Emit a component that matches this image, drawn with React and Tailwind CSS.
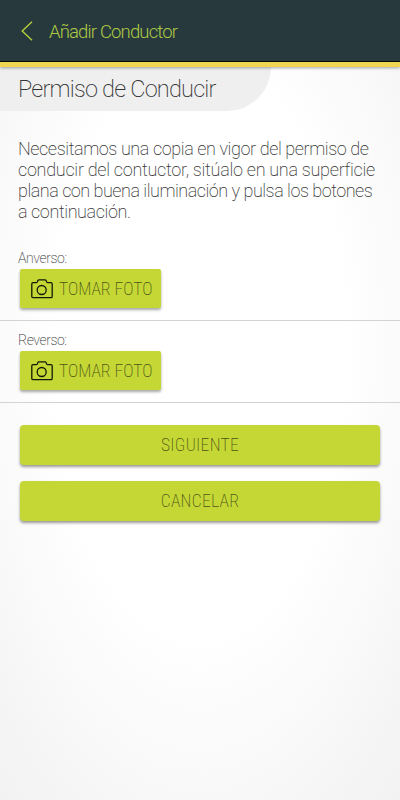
const CameraIcon = () => (
  <svg className="shrink-0" width="22" height="20" viewBox="0 0 22 20" fill="none" stroke="#111a08" strokeWidth="1.3" strokeLinejoin="round">
    <path d="M2 3.7H5.2Q6 3.7 6.3 3L6.9 1.5Q7.2 .9 8 .9H14Q14.8 .9 15.1 1.5L15.7 3Q16 3.7 16.8 3.7H20Q21.2 3.7 21.2 4.9V17.5Q21.2 18.7 20 18.7H2Q.8 18.7 .8 17.5V4.9Q.8 3.7 2 3.7Z" />
    <circle cx="10.7" cy="11" r="4.5" />
  </svg>
);

const PhotoField = ({ label }) => (
  <div className="h-[82px] border-b border-[#d3d3d3] pl-[18px]">
    <p className="pt-[10px] text-[14px] leading-[18px] tracking-[-0.42px] text-[#3a3a3a]">{label}</p>
    <button className="ml-[2px] mt-[2px] flex h-[39px] w-[141px] items-center rounded-[2px] bg-[#c5d734] pl-[11px] shadow-[0_2px_3px_rgba(0,0,0,0.35)]">
      <CameraIcon />
      <span className="ml-[6px] whitespace-nowrap pt-px text-[17.5px] font-stretch-[75%] text-[#4b5418]">TOMAR FOTO</span>
    </button>
  </div>
);

const ActionButton = ({ children }) => (
  <button className="flex h-10 w-full items-center justify-center rounded-[4px] bg-[#c5d734] text-[17.5px] font-stretch-[75%] tracking-[0.3px] text-[#4b5418] shadow-[0_2px_3px_rgba(0,0,0,0.4)]">
    {children}
  </button>
);

const App = () => {
  return (
    <div className="flex h-[800px] w-[400px] flex-col overflow-hidden bg-[radial-gradient(ellipse_290px_570px_at_200px_350px,#fff_50%,#f0f0f0_112%)] font-['Roboto',sans-serif] font-extralight">
      <header className="z-10 flex h-[67px] shrink-0 items-center border-b-[5px] border-[#f0d552] bg-[#27393d] pl-[21px] shadow-[inset_0_-1px_0_#050a05,0_1px_3px_rgba(0,0,0,0.35)]">
        <svg width="12" height="20" viewBox="0 0 12 20" fill="none" stroke="#b3cf3b" strokeWidth="1.4">
          <path d="M11 .8L1.2 10L11 19.2" />
        </svg>
        <h1 className="ml-4 pt-[3px] text-[18.5px] font-light tracking-[-0.85px] text-[#adc945]">Añadir Conductor</h1>
      </header>
      <h2 className="h-[44px] w-[271px] shrink-0 rounded-br-[44px] bg-[#efefef] pl-[18px] text-[23.5px] leading-[44px] tracking-[-0.8px] text-[#333]">
        Permiso de Conducir
      </h2>
      <p className="h-[128px] shrink-0 whitespace-nowrap pl-[18px] pt-[27px] text-[18px] leading-[21px] tracking-[-0.41px] text-[#383838]">
        <span className="block">Necesitamos una copia en vigor del permiso de</span>
        <span className="block tracking-[-0.28px]">conducir del contuctor, sitúalo en una superficie</span>
        <span className="block tracking-[-0.49px]">plana con buena iluminación y pulsa los botones</span>
        <span className="block">a continuación.</span>
      </p>
      <PhotoField label="Anverso:" />
      <PhotoField label="Reverso:" />
      <div className="flex flex-col gap-4 px-5 pt-[22px]">
        <ActionButton>SIGUIENTE</ActionButton>
        <ActionButton>CANCELAR</ActionButton>
      </div>
    </div>
  );
};

export default App;
